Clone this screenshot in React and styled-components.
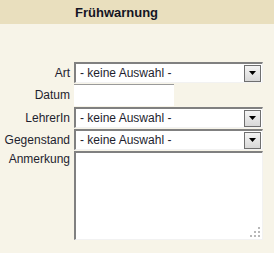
import React from "react";
import styled, { createGlobalStyle } from "styled-components";

const Global = createGlobalStyle`
  html, body { margin: 0; padding: 0; background: #f7f4e8; }
  body { font-family: "Liberation Sans", Arial, sans-serif; font-size: 12px; color: #1e1e2e; }
`;

const Page = styled.div`
  width: 274px;
  height: 253px;
  background: #f7f4e8;
  overflow: hidden;
`;

const Header = styled.div`
  height: 24px;
  background: #e9dfbe;
  display: flex;
  align-items: center;
  padding-left: 75px;
  font-weight: bold;
  font-size: 13px;
  color: #141424;
`;

const Form = styled.div`
  display: grid;
  grid-template-columns: 70px 189px;
  column-gap: 4px;
  row-gap: 1px;
  padding-top: 38px;
`;

const Label = styled.div`
  text-align: right;
  display: flex;
  align-items: ${(p) => (p.$top ? "flex-start" : "center")};
  justify-content: flex-end;
  padding-top: ${(p) => (p.$top ? "1px" : "0")};
  line-height: 14px;
  white-space: nowrap;
`;

const SelectBox = styled.div`
  height: 21px;
  box-sizing: border-box;
  background: #fff;
  border-top: 2px solid #808080;
  border-left: 2px solid #808080;
  border-right: 1px solid #f2f2f2;
  border-bottom: 1px solid #f2f2f2;
  display: flex;
  align-items: center;
  padding-left: 4px;
  padding-right: 1px;
`;

const SelectText = styled.span`
  flex: 1;
  line-height: 14px;
`;

const ArrowButton = styled.div`
  width: 17px;
  height: 17px;
  box-sizing: border-box;
  border: 1px solid #6f6f6f;
  background: linear-gradient(#f4f4f4, #d8d8d8);
  display: flex;
  align-items: center;
  justify-content: center;
`;

const DateInput = styled.div`
  width: 100px;
  height: 22px;
  box-sizing: border-box;
  background: #fff;
  border-top: 1px solid #9a9a9a;
`;

const TextArea = styled.div`
  position: relative;
  height: 89px;
  box-sizing: border-box;
  background: #fff;
  border-top: 2px solid #808080;
  border-left: 2px solid #808080;
  border-right: 1px solid #f2f2f2;
  border-bottom: 1px solid #f2f2f2;
`;

const Grip = styled.svg`
  position: absolute;
  right: 2px;
  bottom: 2px;
`;

function Select() {
  return (
    <SelectBox>
      <SelectText>- keine Auswahl -</SelectText>
      <ArrowButton>
        <svg width="7" height="4" viewBox="0 0 7 4">
          <path d="M0 0H7L3.5 4Z" fill="#000" />
        </svg>
      </ArrowButton>
    </SelectBox>
  );
}

export default function App() {
  return (
    <Page>
      <Global />
      <Header>Frühwarnung</Header>
      <Form>
        <Label>Art</Label>
        <Select />
        <Label>Datum</Label>
        <DateInput />
        <Label>LehrerIn</Label>
        <Select />
        <Label>Gegenstand</Label>
        <Select />
        <Label $top>Anmerkung</Label>
        <TextArea>
          <Grip width="10" height="10" viewBox="0 0 10 10">
            <rect x="8" y="0" width="2" height="2" fill="#b8b8b8" />
            <rect x="4" y="4" width="2" height="2" fill="#b8b8b8" />
            <rect x="8" y="4" width="2" height="2" fill="#b8b8b8" />
            <rect x="0" y="8" width="2" height="2" fill="#b8b8b8" />
            <rect x="4" y="8" width="2" height="2" fill="#b8b8b8" />
            <rect x="8" y="8" width="2" height="2" fill="#b8b8b8" />
          </Grip>
        </TextArea>
      </Form>
    </Page>
  );
}
